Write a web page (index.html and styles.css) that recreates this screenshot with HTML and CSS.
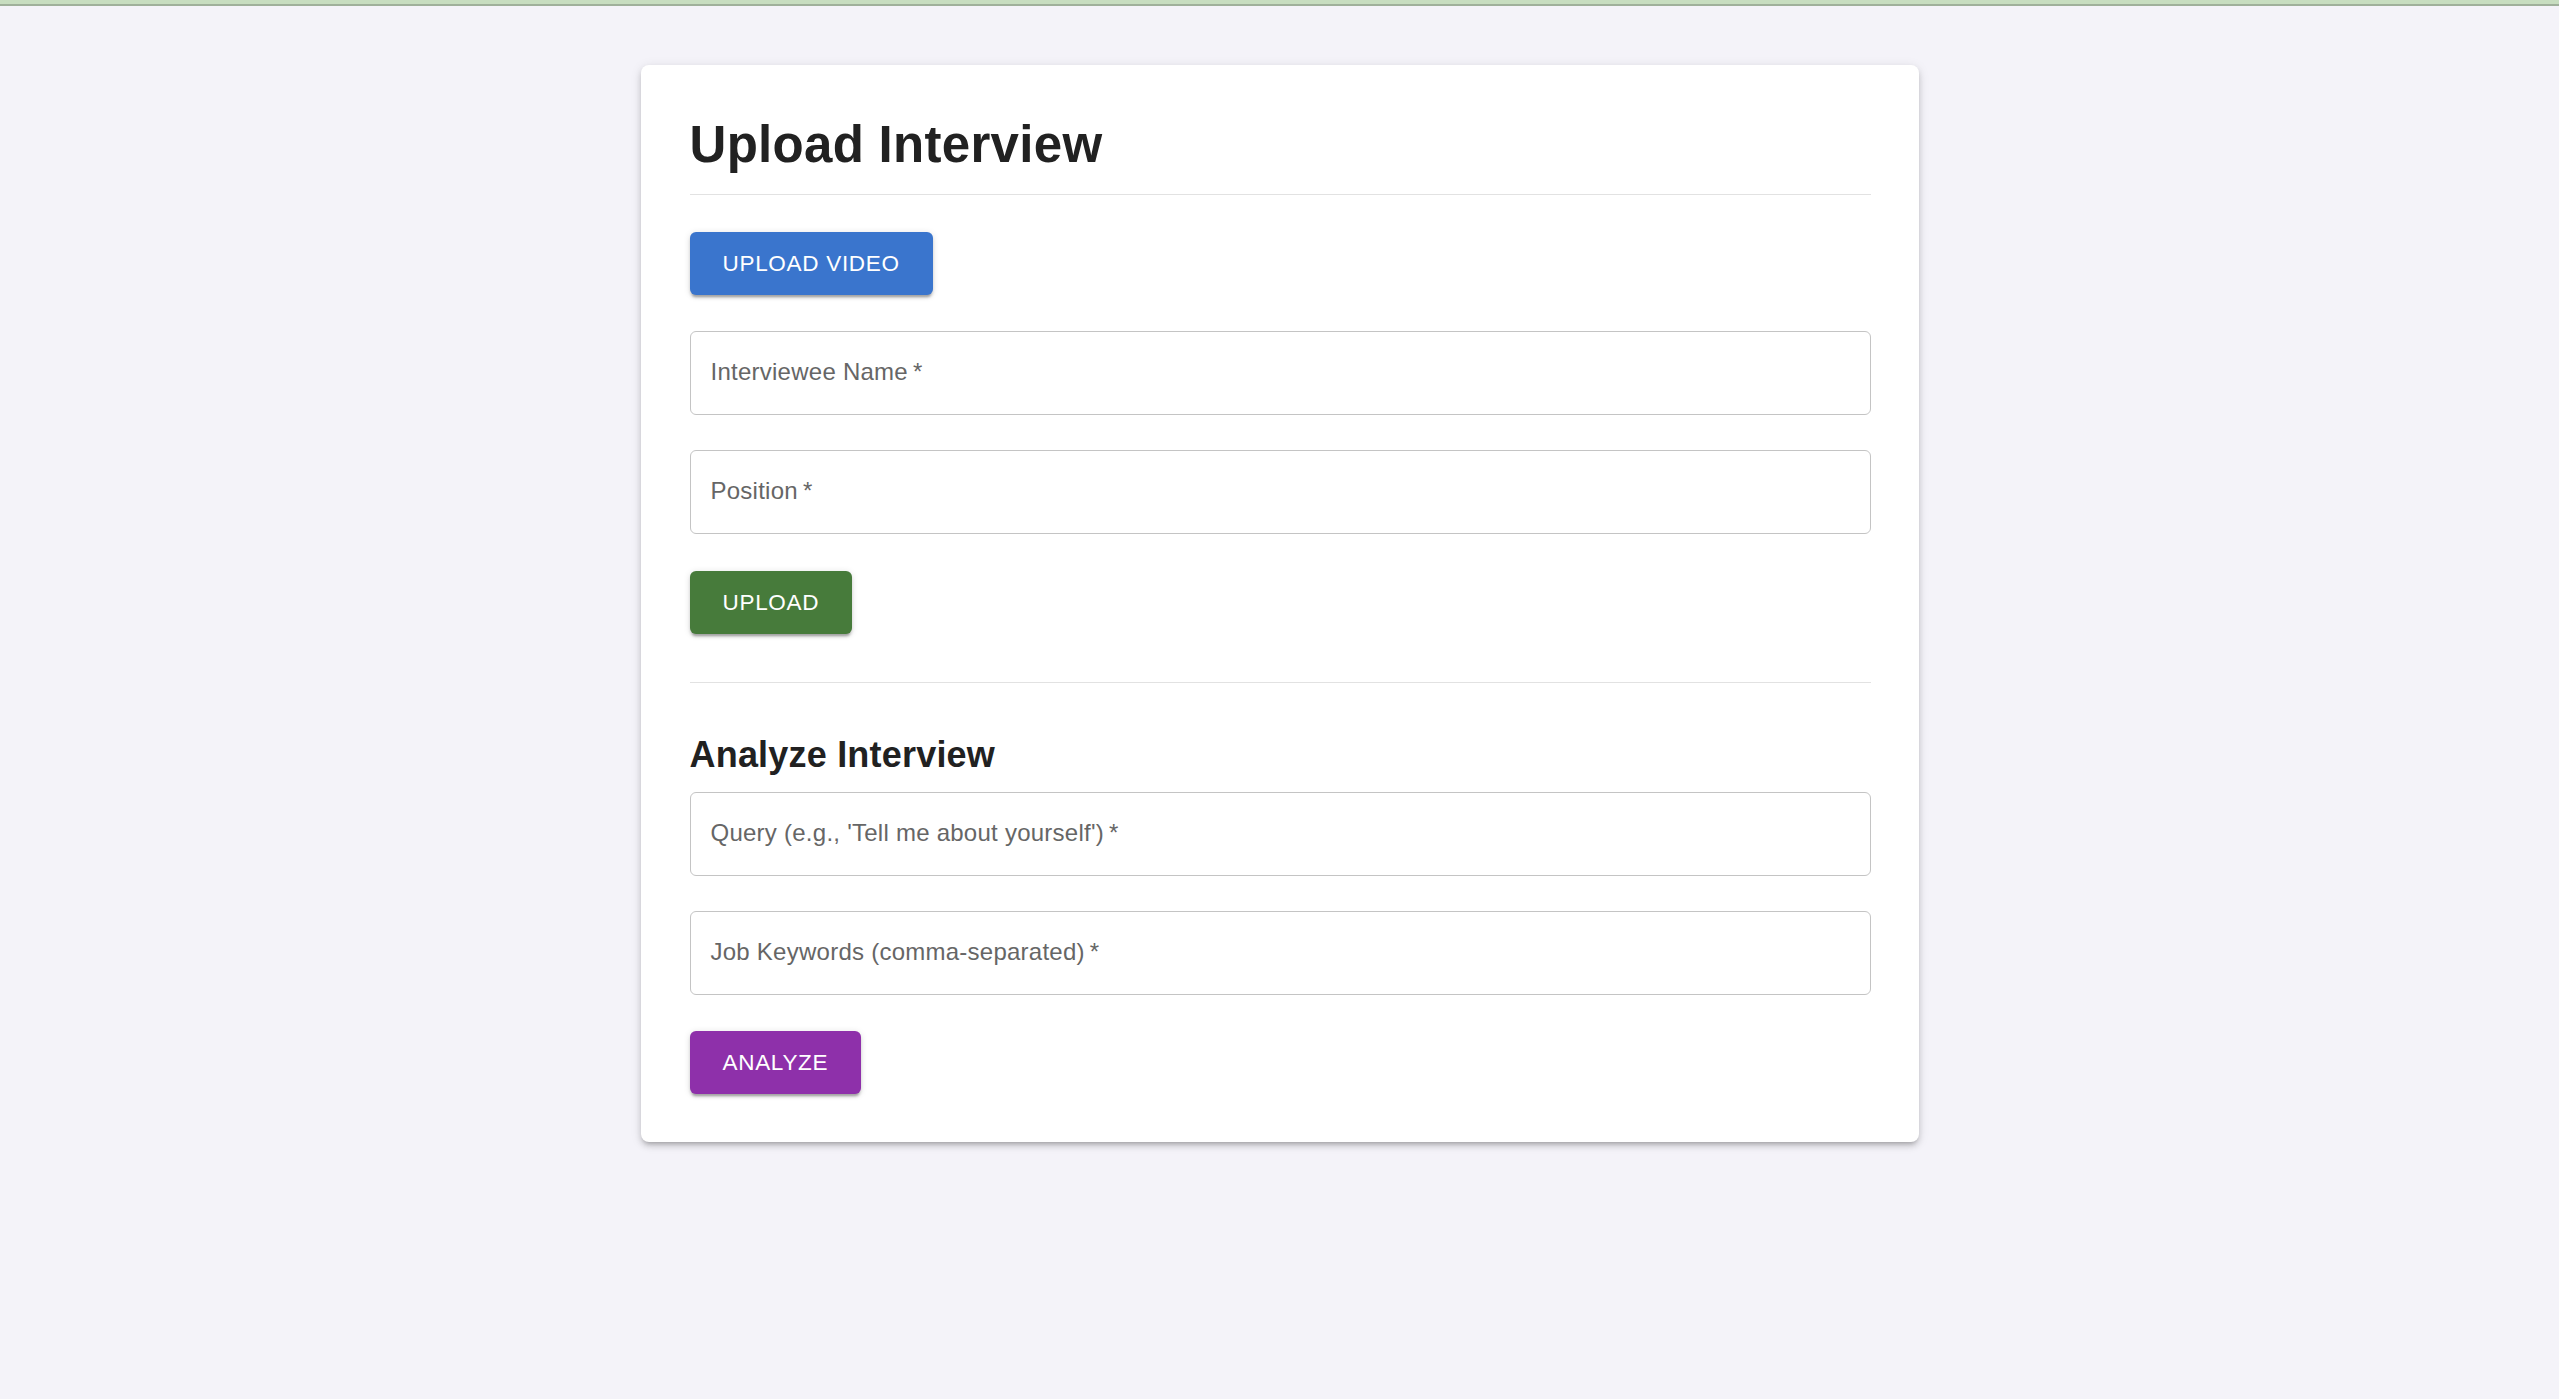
FILE: index.html
```html
<!DOCTYPE html>
<html lang="en">
<head>
<meta charset="utf-8">
<title>Upload Interview</title>
<link rel="stylesheet" href="styles.css">
</head>
<body>
<div class="topbar"></div>
<main class="container">
  <section class="card">
    <h1 class="title">Upload Interview</h1>
    <hr class="divider divider-top">
    <button class="btn btn-blue btn-video">Upload Video</button>
    <div class="field field-first"><span class="label">Interviewee Name&thinsp;*</span></div>
    <div class="field field-next"><span class="label">Position&thinsp;*</span></div>
    <button class="btn btn-green btn-upload">Upload</button>
    <hr class="divider divider-mid">
    <h2 class="subtitle">Analyze Interview</h2>
    <div class="field field-query"><span class="label">Query (e.g., 'Tell me about yourself')&thinsp;*</span></div>
    <div class="field field-next"><span class="label">Job Keywords (comma-separated)&thinsp;*</span></div>
    <button class="btn btn-purple btn-analyze">Analyze</button>
  </section>
</main>
</body>
</html>
```

FILE: styles.css
```css
* { box-sizing: border-box; }

html, body {
  margin: 0;
  padding: 0;
}

body {
  background: #f4f3f9;
  font-family: "Liberation Sans", Arial, sans-serif;
  color: #212121;
  min-height: 1399px;
}

.topbar {
  height: 6px;
  background: #c7ddc0;
  border-bottom: 2px solid #9fb09b;
}

.container {
  width: 1278px;
  margin: 59px auto 0;
}

.card {
  background: #ffffff;
  border-radius: 8px;
  padding: 48px 48px 48px 49px;
  display: flex;
  flex-direction: column;
  align-items: flex-start;
  box-shadow: 0 4px 4px -3px rgba(0,0,0,0.2), 0 4px 6px 0 rgba(0,0,0,0.14), 0 2px 12px 0 rgba(0,0,0,0.10);
}

.title {
  margin: 0 0 18px;
  font-size: 51px;
  line-height: 63px;
  font-weight: 700;
  letter-spacing: 0.3px;
  color: #212121;
}

.divider {
  align-self: stretch;
  border: 0;
  height: 1px;
  background: #e2e2e2;
  margin: 0;
}

.divider-top { margin-bottom: 37px; }
.divider-mid { margin-top: 48px; margin-bottom: 48px; }

.btn {
  height: 63px;
  padding: 0 33px;
  border: 0;
  border-radius: 6px;
  font-family: "Liberation Sans", Arial, sans-serif;
  font-size: 22.5px;
  letter-spacing: 0.7px;
  text-transform: uppercase;
  color: #ffffff;
  box-shadow: 0 4px 2px -2px rgba(0,0,0,0.2), 0 3px 3px 0 rgba(0,0,0,0.14), 0 1px 7px 0 rgba(0,0,0,0.12);
}

.btn-blue { background: #3a75cd; }
.btn-green { background: #477b3b; margin-top: 37px; }
.btn-purple { background: #8e30aa; margin-top: 36px; }

.field {
  align-self: stretch;
  height: 84px;
  border: 1.5px solid #c4c4c4;
  border-radius: 6px;
  display: flex;
  align-items: center;
  padding: 0 20px 2px;
}

.field-first { margin-top: 36px; }
.field-next { margin-top: 35px; }
.field-query { margin-top: 13px; }

.label {
  font-size: 24px;
  line-height: 34px;
  letter-spacing: 0.25px;
  color: #666666;
}

.subtitle {
  margin: 0;
  font-size: 36px;
  line-height: 48px;
  font-weight: 700;
  letter-spacing: 0.2px;
  color: #212121;
}
```
